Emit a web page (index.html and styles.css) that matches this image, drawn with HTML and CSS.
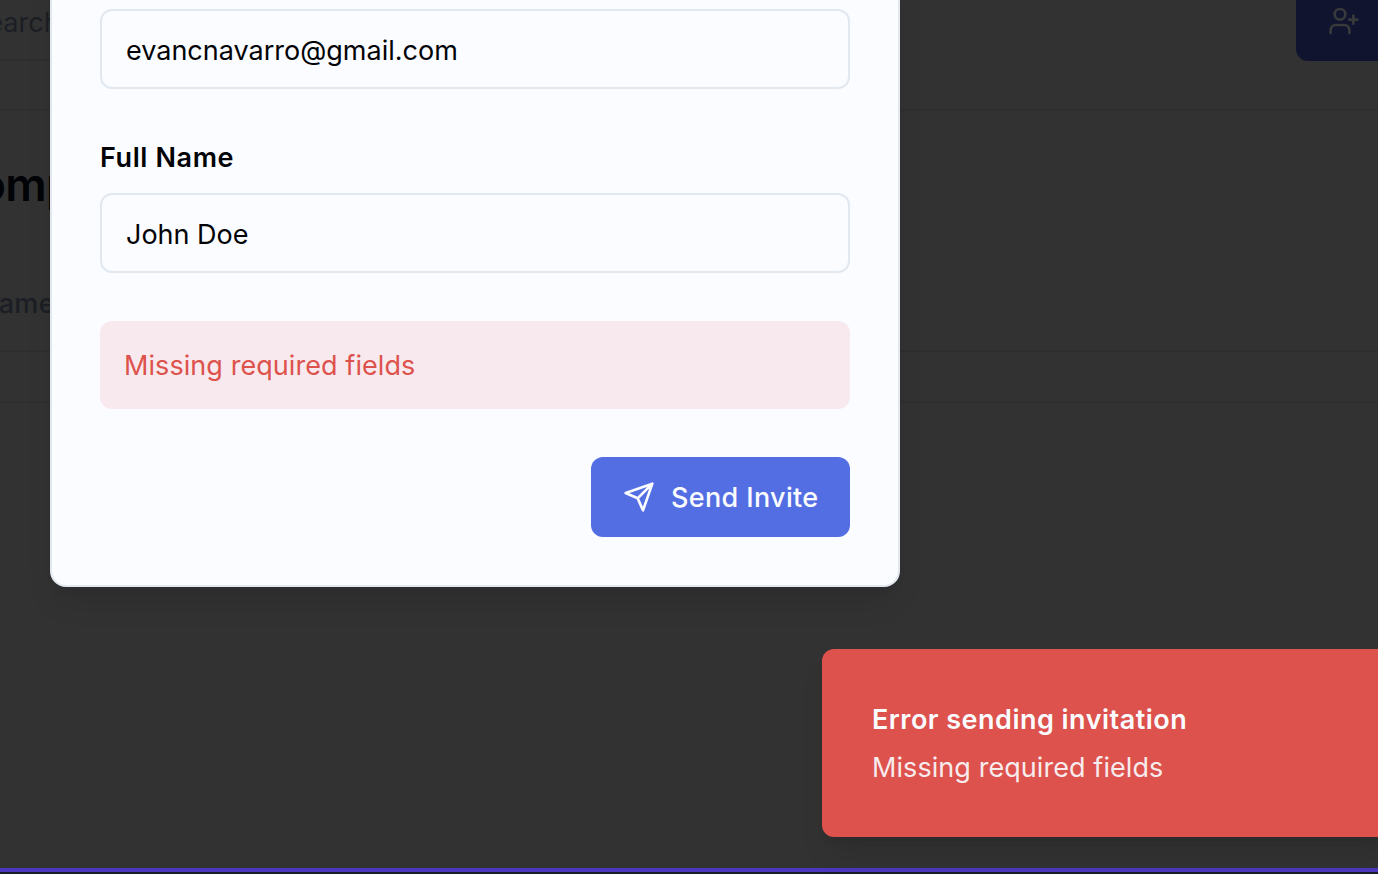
FILE: index.html
```
<!DOCTYPE html>
<html lang="en">
<head>
<meta charset="utf-8">
<title>Send Invite</title>
<link rel="stylesheet" href="styles.css">
</head>
<body>
<div class="screen">
  <div class="page">
    <header class="toolbar">
      <div class="search"><span class="search-text">Search</span></div>
      <div class="add-user">
        <svg class="icon" viewBox="0 0 24 24"><circle cx="9" cy="7" r="4"/><path d="M16 21v-2a4 4 0 0 0-4-4H6a4 4 0 0 0-4 4v2M19 8v6M22 11h-6"/></svg>
      </div>
    </header>
    <h1 class="page-title"><span class="title-text">Comp</span></h1>
    <div class="table-head"><span class="head-text">Name</span></div>
    <div class="table-row"></div>
    <div class="page-rest"></div>
    <div class="bottom-bar"></div>
  </div>

  <form class="modal">
    <div class="input">evancnavarro@gmail.com</div>
    <label class="label">Full Name</label>
    <div class="input">John Doe</div>
    <div class="alert">Missing required fields</div>
    <div class="actions">
      <button class="send" type="button">
        <svg class="icon" viewBox="0 0 24 24"><path d="M22 2 11 13M22 2l-7 20-4-9-9-4Z"/></svg>
        <span class="send-text">Send Invite</span>
      </button>
    </div>
  </form>

  <div class="toast">
    <div class="toast-title">Error sending invitation</div>
    <div class="toast-body">Missing required fields</div>
  </div>
</div>
</body>
</html>
```
FILE: styles.css
```
* { box-sizing: border-box; }
body { margin: 0; }
.screen {
  position: relative;
  width: 1378px;
  height: 874px;
  overflow: hidden;
  background: #323232;
  color: #020306;
  font: 400 27px/41px Inter, sans-serif;
}
.page { display: flex; flex-direction: column; height: 100%; }
.toolbar {
  display: flex;
  justify-content: space-between;
  height: 111px;
  border-bottom: 2px solid #2d2e2f;
}
.search {
  width: 420px;
  height: 61px;
  padding-top: 2px;
  border-bottom: 2px solid #2d2e2f;
  color: #1b1e24;
}
.search-text { margin-left: -30px; }
.add-user {
  width: 82px;
  height: 61px;
  padding: 5px 0 0 32px;
  border-bottom-left-radius: 12px;
  background: #10142f;
  color: #38393b;
}
.icon {
  display: block;
  flex: none;
  width: 32px;
  height: 32px;
  fill: none;
  stroke: currentColor;
  stroke-width: 2;
  stroke-linecap: round;
  stroke-linejoin: round;
}
.page-title {
  height: 149px;
  margin: 0;
  padding-top: 49px;
  font-size: 46px;
  font-weight: 600;
  line-height: 48px;
  letter-spacing: -.8px;
}
.title-text { margin-left: -55px; }
.table-head {
  height: 92px;
  padding-top: 23px;
  border-bottom: 2px solid #2d2e2f;
  color: #1b1e24;
  font-weight: 500;
  letter-spacing: .3px;
}
.head-text { margin-left: -22px; }
.table-row { height: 51px; border-bottom: 2px solid #2d2e2f; }
.page-rest { flex: 1; }
.bottom-bar { height: 6px; background: #191c29; border-top: 4px solid #4a37bd; }

.modal {
  position: absolute;
  left: 50px;
  top: -40px;
  width: 850px;
  height: 627px;
  padding: 47px 48px 48px;
  border: 2px solid #e2e8f0;
  border-radius: 16px;
  background: #fafcff;
  box-shadow: 0 20px 30px -6px rgba(0, 0, 0, .1), 0 8px 12px -8px rgba(0, 0, 0, .1);
}
.input {
  height: 80px;
  padding: 19px 24px;
  border: 2px solid #e2e8f0;
  border-radius: 12px;
}
.label {
  display: block;
  height: 104px;
  padding-top: 48px;
  font-weight: 600;
  letter-spacing: .6px;
}
.alert {
  height: 88px;
  margin-top: 48px;
  padding: 24px;
  border-radius: 12px;
  background: #f7e9ee;
  color: #de524c;
  letter-spacing: .07px;
}
.actions { display: flex; justify-content: flex-end; margin-top: 48px; }
.send {
  display: flex;
  align-items: center;
  gap: 16px;
  width: 259px;
  height: 80px;
  padding: 0 32px;
  border: 0;
  border-radius: 12px;
  background: #536ee3;
  color: #fafcff;
  font: 500 27px/41px Inter, sans-serif;
  letter-spacing: .35px;
  white-space: nowrap;
}
.toast {
  position: absolute;
  left: 822px;
  top: 649px;
  width: 580px;
  height: 188px;
  padding: 50px;
  border-radius: 12px;
  background: #dd524c;
  color: #fafcff;
  box-shadow: 0 20px 30px -6px rgba(0, 0, 0, .1), 0 8px 12px -8px rgba(0, 0, 0, .1);
}
.toast-title { font-weight: 600; letter-spacing: .48px; }
.toast-body { margin-top: 7px; opacity: .9; letter-spacing: .07px; }
```
